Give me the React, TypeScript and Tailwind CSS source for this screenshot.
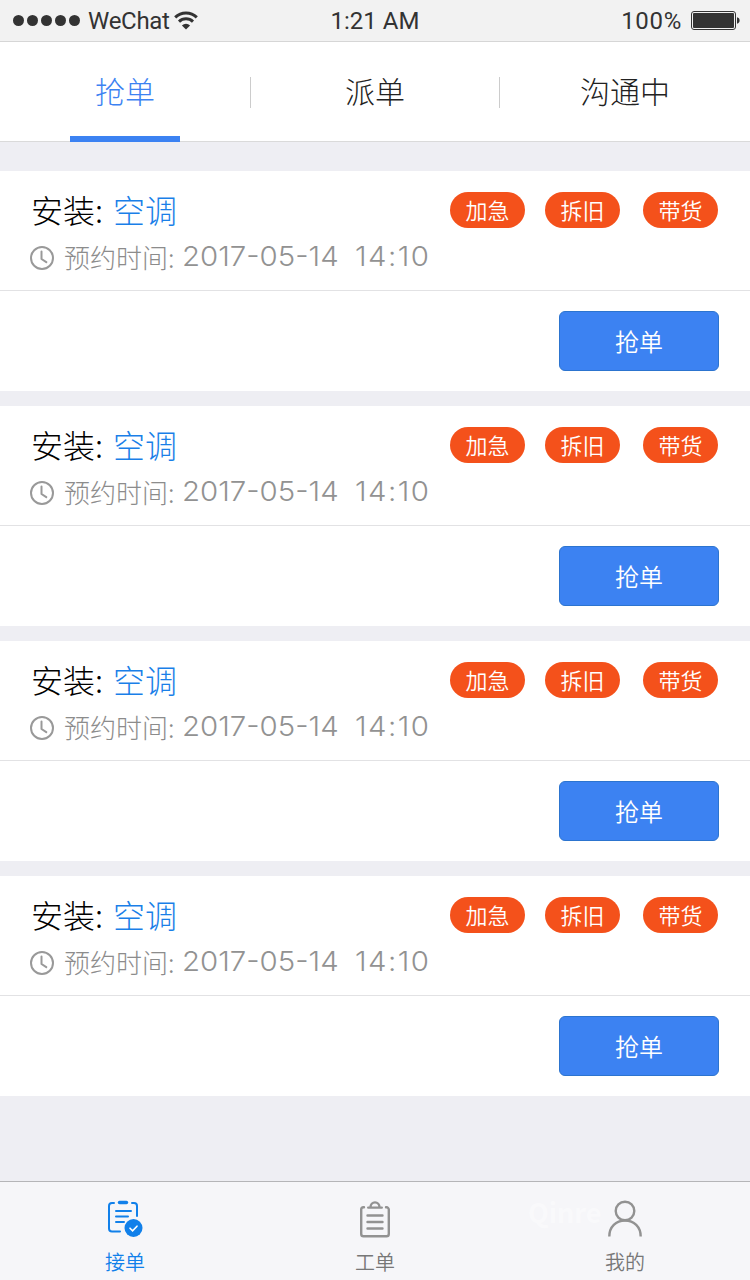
const tabs = ["抢单", "派单", "沟通中"];

const orders = [
  { id: 1, type: "安装", product: "空调", date: "2017-05-14", time: "14:10" },
  { id: 2, type: "安装", product: "空调", date: "2017-05-14", time: "14:10" },
  { id: 3, type: "安装", product: "空调", date: "2017-05-14", time: "14:10" },
  { id: 4, type: "安装", product: "空调", date: "2017-05-14", time: "14:10" },
];

type Order = (typeof orders)[number];

function StatusBar() {
  return (
    <div className="grid h-[42px] grid-cols-3 items-center border-b border-[#d6d6d6] bg-[#f2f2f2] pr-[10px] pl-[13px] font-['Roboto',sans-serif] text-2xl text-[#333]">
      <div className="flex items-center">
        <div className="flex gap-[3px]">
          {[0, 1, 2, 3, 4].map((i) => (
            <span key={i} className="size-[11px] rounded-full bg-[#333]" />
          ))}
        </div>
        <span className="ml-[8px] tracking-[-0.3px]">WeChat</span>
        <svg className="ml-[4px]" width="24" height="19" viewBox="0 0 24 19" fill="none" stroke="#333" strokeWidth="3">
          <path d="M1.2 6.4a15.5 15.5 0 0 1 21.6 0" />
          <path d="M5 10.6a10.2 10.2 0 0 1 14 0" />
          <path d="M12 18.4 7.9 14.4a6 6 0 0 1 8.2 0Z" fill="#333" stroke="none" />
        </svg>
      </div>
      <div className="pr-[3px] text-center">1:21 AM</div>
      <div className="flex items-center justify-end">
        <span className="mr-[9px] tracking-[0.7px]">100%</span>
        <svg width="49" height="19" viewBox="0 0 49 19">
          <rect x="0.5" y="0.5" width="44" height="18" rx="2.5" fill="none" stroke="#333" />
          <rect x="2" y="2" width="41" height="15" rx="1" fill="#333" />
          <path d="M46 6.3c1.7.3 2.6 1.6 2.6 3.2s-.9 2.9-2.6 3.2Z" fill="#333" />
        </svg>
      </div>
    </div>
  );
}

function Tabs() {
  return (
    <nav className="grid h-[100px] grid-cols-3 border-b border-[#dadada] bg-white text-[30px] font-light text-[#222]">
      {tabs.map((tab, i) => (
        <button
          key={tab}
          className={
            i === 0
              ? "relative flex items-center justify-center pb-[3px] text-[#3c82f2]"
              : "relative flex items-center justify-center pb-[3px]"
          }
        >
          {tab}
          {i === 0 && <span className="absolute -bottom-px h-[6px] w-[110px] bg-[#3c82f2]" />}
          {i === 1 && <span className="absolute top-[35px] left-0 h-[31px] w-px bg-[#ccc]" />}
          {i === 1 && <span className="absolute top-[35px] right-0 h-[31px] w-px bg-[#ccc]" />}
        </button>
      ))}
    </nav>
  );
}

function Tag({ label }: { label: string }) {
  return (
    <span className="flex h-[36px] w-[75px] items-center justify-center rounded-full bg-[#f4511b] pb-px text-[22px] font-[350] text-white">
      {label}
    </span>
  );
}

function OrderCard({ order }: { order: Order }) {
  return (
    <article className="h-[220px] bg-white">
      <div className="h-[120px] border-b border-[#e2e2e4] pt-[18px] pr-[32px] pl-[30px]">
        <div className="flex h-[41px] items-center justify-between">
          <h2 className="pb-px pl-px text-[32px] font-light text-black">
            {order.type}: <span className="ml-[3px] text-[#1a7fe8]">{order.product}</span>
          </h2>
          <div className="flex">
            <Tag label="加急" />
            <span className="mr-[23px] ml-[20px]">
              <Tag label="拆旧" />
            </span>
            <Tag label="带货" />
          </div>
        </div>
        <div className="mt-[9px] flex h-[38px] items-center text-[26px] font-light text-[#8c8c8c]">
          <svg width="24" height="24" viewBox="0 0 24 24" fill="none" stroke="#999" strokeWidth="2">
            <circle cx="12" cy="12" r="11" />
            <path d="M11.5 5.5v7.5l4.8 3.2" strokeLinecap="round" strokeLinejoin="round" />
          </svg>
          <span className="ml-[10px] pb-[4px]">预约时间:</span>
          <span className="ml-[7px] w-[156px] origin-left scale-x-[1.09] pb-px font-['Inter',sans-serif] text-[27px] text-[#929292]">
            {order.date}
          </span>
          <span className="ml-[17px] origin-left scale-x-[1.09] pb-px font-['Inter',sans-serif] text-[27px] tracking-[1.3px] text-[#929292]">
            {order.time}
          </span>
        </div>
      </div>
      <div className="flex justify-end pt-[20px] pr-[31px]">
        <button className="h-[60px] w-[160px] rounded-[6px] border border-[#2c74cf] bg-[#3c82f2] text-2xl font-[350] text-white">
          抢单
        </button>
      </div>
    </article>
  );
}

function OrdersIcon() {
  return (
    <svg width="36" height="38" viewBox="0 0 36 38" fill="none" stroke="#1180ea" strokeWidth="2" strokeLinecap="round">
      <path d="M7 3H5a3 3 0 0 0-3 3v22.5a3 3 0 0 0 3 3h8" />
      <path d="M25 3h2a3 3 0 0 1 3 3v10" />
      <path d="M12.5 2.5h7" strokeWidth="3.4" />
      <path d="M9 11h15M9 16.5h12M9 22h8" />
      <circle cx="26.5" cy="28" r="9" fill="#1180ea" stroke="none" />
      <path d="m23 28.2 2.6 2.6 4.4-4.6" stroke="#fff" strokeWidth="1.6" />
    </svg>
  );
}

function WorkIcon() {
  return (
    <svg width="30" height="37" viewBox="0 0 30 37" fill="none" stroke="#929292" strokeWidth="2.4" strokeLinecap="round">
      <path d="M4 6.3h-.5A2.3 2.3 0 0 0 1.2 8.6V33A2.3 2.3 0 0 0 3.5 35.3h23a2.3 2.3 0 0 0 2.3-2.3V8.6a2.3 2.3 0 0 0-2.3-2.3H26" />
      <path d="M8.2 6.6h13.6M10.5 6.2a4.5 4.8 0 0 1 9 0" />
      <path d="M7.5 14.5h15M7.5 21h15M7.5 27.5h15" />
    </svg>
  );
}

function ProfileIcon() {
  return (
    <svg width="34" height="37" viewBox="0 0 34 37" fill="none" stroke="#929292" strokeWidth="2.4">
      <circle cx="17" cy="11" r="9.3" />
      <path d="M1.3 36.5C1.3 27 8 20.5 17 20.5S32.7 27 32.7 36.5" />
    </svg>
  );
}

function BottomNav() {
  return (
    <nav className="relative grid h-[99px] grid-cols-3 border-t border-[#b5b5b8] bg-[#f6f6f9] text-xl font-[350] text-[#777]">
      <a className="flex flex-col items-center pt-[18px] text-[#1180ea]">
        <OrdersIcon />
        <span className="mt-[10px]">接单</span>
      </a>
      <a className="flex flex-col items-center pt-[19px]">
        <WorkIcon />
        <span className="mt-[10px]">工单</span>
      </a>
      <a className="flex flex-col items-center pt-[18px]">
        <ProfileIcon />
        <span className="mt-[11px]">我的</span>
      </a>
      <span className="absolute top-[11px] left-[528px] text-[27px] font-bold whitespace-nowrap text-white/40">
        Qinre
      </span>
    </nav>
  );
}

export default function App() {
  return (
    <div className="flex h-[1280px] w-[750px] flex-col overflow-hidden bg-[#eeeef3] font-['Noto_Sans_CJK_SC',sans-serif]">
      <StatusBar />
      <Tabs />
      <main className="flex flex-1 flex-col gap-[15px] pt-[29px]">
        {orders.map((order) => (
          <OrderCard key={order.id} order={order} />
        ))}
      </main>
      <BottomNav />
    </div>
  );
}
